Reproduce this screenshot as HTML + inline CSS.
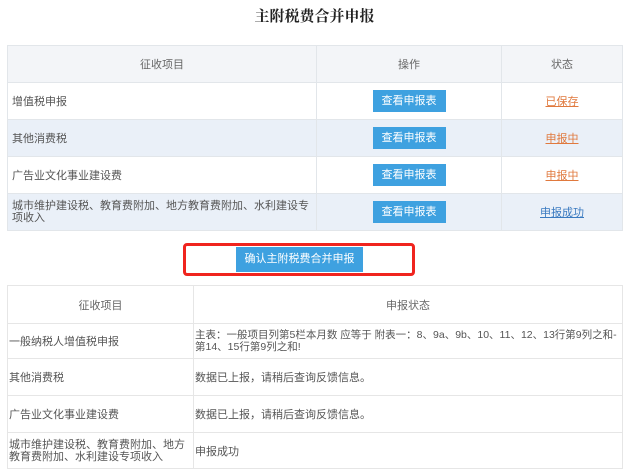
<!DOCTYPE html>
<html><head><meta charset="utf-8"><style>
*{margin:0;padding:0;box-sizing:border-box}
body{width:629px;height:474px;background:#fff;font-family:"Liberation Sans","Noto Sans CJK SC",sans-serif;color:#555;position:relative;overflow:hidden}
.t{position:absolute;left:0;width:629px;top:5px;text-align:center;font-size:15px;font-weight:bold;color:#222;font-family:"Noto Serif CJK SC",serif}
table{position:absolute;border-collapse:collapse;font-size:11px}
td{border:1px solid #e2e6ea;padding:0 4px}
.a{left:7px;top:45px;width:616px}
.a tr{height:37px}
.a .h td{background:#f3f5f8;text-align:center;color:#666}
.a .s td{background:#eaf0f8}
.c{text-align:center}
.btn{display:inline-block;width:73px;height:22px;line-height:22px;background:#3ea1e0;color:#fff;font-size:11px;text-align:center}
.or{color:#e0793d;text-decoration:underline}
.bl{color:#3a7ac0;text-decoration:underline}
.red{position:absolute;left:183px;top:243px;width:232px;height:33px;border:3px solid #f0241e;border-radius:4px}
.cb{position:absolute;left:236px;top:247px;width:127px;height:25px;background:#3ea1e0;color:#fff;font-size:11px;text-align:center;line-height:25px}
.b{left:7px;top:285px;width:616px}
.b td{border:1px solid #e6e6e6;padding:0 1px}
.b .h td{text-align:center;color:#666}
</style></head><body>
<div class="t">主附税费合并申报</div>
<table class="a">
<tr class="h"><td style="width:309px">征收项目</td><td style="width:185px">操作</td><td>状态</td></tr>
<tr><td>增值税申报</td><td class="c"><span class="btn">查看申报表</span></td><td class="c"><span class="or">已保存</span></td></tr>
<tr class="s"><td>其他消费税</td><td class="c"><span class="btn">查看申报表</span></td><td class="c"><span class="or">申报中</span></td></tr>
<tr><td>广告业文化事业建设费</td><td class="c"><span class="btn">查看申报表</span></td><td class="c"><span class="or">申报中</span></td></tr>
<tr class="s"><td style="line-height:12px">城市维护建设税、教育费附加、地方教育费附加、水利建设专项收入</td><td class="c"><span class="btn">查看申报表</span></td><td class="c"><span class="bl">申报成功</span></td></tr>
</table>
<div class="red"></div>
<div class="cb">确认主附税费合并申报</div>
<table class="b">
<tr class="h" style="height:38px"><td style="width:186px">征收项目</td><td>申报状态</td></tr>
<tr style="height:35px"><td>一般纳税人增值税申报</td><td style="line-height:12px;font-size:10.5px">主表：一般项目列第5栏本月数 应等于 附表一：8、9a、9b、10、11、12、13行第9列之和-第14、15行第9列之和!</td></tr>
<tr style="height:37px"><td>其他消费税</td><td>数据已上报，请稍后查询反馈信息。</td></tr>
<tr style="height:37px"><td>广告业文化事业建设费</td><td>数据已上报，请稍后查询反馈信息。</td></tr>
<tr style="height:36px"><td style="line-height:12px">城市维护建设税、教育费附加、地方教育费附加、水利建设专项收入</td><td>申报成功</td></tr>
</table>
</body></html>
